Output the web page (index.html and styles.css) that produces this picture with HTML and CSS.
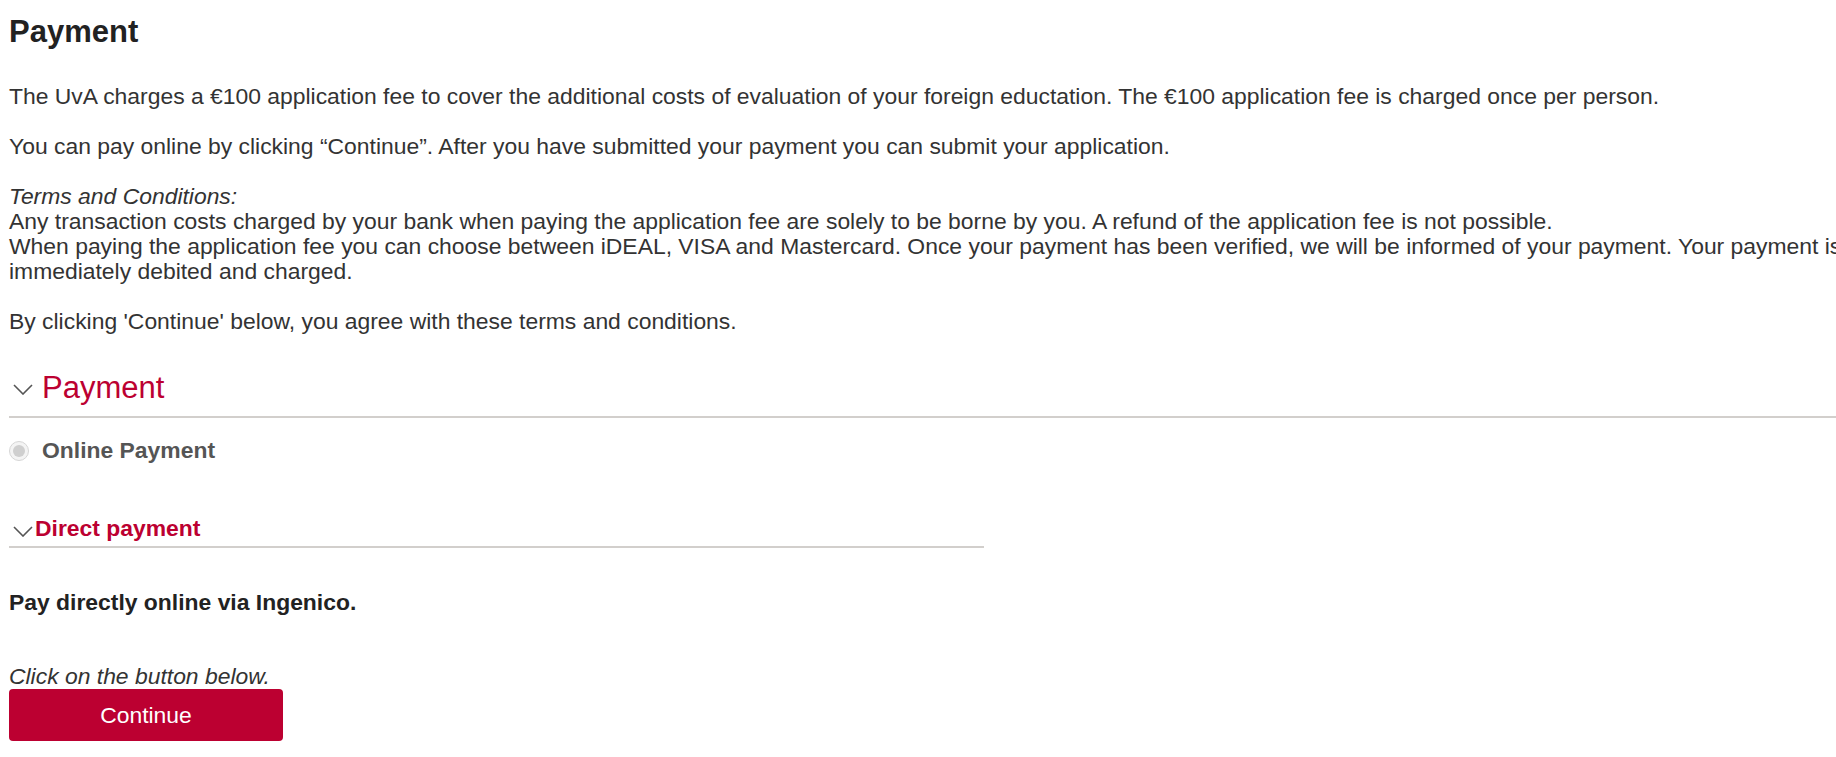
FILE: index.html
```html
<!DOCTYPE html>
<html lang="en">
<head>
  <meta charset="UTF-8">
  <title>Payment</title>
  <link rel="stylesheet" href="styles.css">
</head>
<body>
  <div class="page">
    <h1>Payment</h1>
    <p>The UvA charges a €100 application fee to cover the additional costs of evaluation of your foreign eductation. The €100 application fee is charged once per person.</p>
    <p>You can pay online by clicking “Continue”. After you have submitted your payment you can submit your application.</p>
    <p><em>Terms and Conditions:</em><br>
      Any transaction costs charged by your bank when paying the application fee are solely to be borne by you. A refund of the application fee is not possible.<br>
      When paying the application fee you can choose between iDEAL, VISA and Mastercard. Once your payment has been verified, we will be informed of your payment. Your payment is immediately debited and charged.</p>
    <p>By clicking 'Continue' below, you agree with these terms and conditions.</p>

    <div class="section-head">
      <svg class="chevron" width="20" height="11" viewBox="0 0 20 11"><polyline points="1,1 10,10 19,1" fill="none" stroke="#555" stroke-width="1.6"/></svg>
      <span>Payment</span>
    </div>

    <label class="option">
      <span class="radio"><span class="dot"></span></span>
      Online Payment
    </label>

    <div class="sub-head">
      <svg class="chevron-sm" width="20" height="11" viewBox="0 0 20 11"><polyline points="1,1 10,10 19,1" fill="none" stroke="#555" stroke-width="1.6"/></svg>
      <span>Direct payment</span>
    </div>

    <p class="via">Pay directly online via Ingenico.</p>
    <p class="hint"><em>Click on the button below.</em></p>
    <button class="btn-continue">Continue</button>
  </div>
</body>
</html>
```

FILE: styles.css
```css
body {
  margin: 0;
  padding: 0;
  overflow: hidden;
  background: #fff;
  font-family: "Liberation Sans", Arial, sans-serif;
  font-size: 22.9px;
  line-height: 25px;
  color: #333;
}
.page {
  width: 1900px;
  padding-left: 9px;
}
h1 {
  margin: 14px 0 35px;
  font-size: 31px;
  line-height: 35px;
  color: #222;
}
p {
  margin: 0 0 25px;
}
.section-head {
  display: flex;
  align-items: center;
  gap: 9px;
  margin-top: 36px;
  padding: 0 0 11px 4px;
  border-bottom: 2px solid #d2cfcc;
  font-size: 31px;
  line-height: 35px;
  color: #bc0031;
}
.section-head .chevron {
  margin-top: 4px;
}
.option {
  display: flex;
  align-items: center;
  gap: 13px;
  margin-top: 20px;
  font-weight: bold;
  color: #555;
}
.radio {
  display: flex;
  align-items: center;
  justify-content: center;
  width: 18px;
  height: 18px;
  border: 1px solid #d6d6d6;
  border-radius: 50%;
  background: #f4f4f4;
}
.radio .dot {
  width: 12px;
  height: 12px;
  border-radius: 50%;
  background: #cfcfcf;
}
.sub-head {
  display: flex;
  align-items: flex-end;
  gap: 2px;
  width: 971px;
  margin-top: 53px;
  padding: 0 0 5px 4px;
  border-bottom: 2px solid #d2cfcc;
  font-weight: bold;
  color: #bc0031;
}
.sub-head .chevron-sm {
  margin-bottom: 4px;
}
.via {
  margin: 42px 0 49px;
  font-weight: bold;
  color: #222;
}
.hint {
  margin: 0;
}
.btn-continue {
  display: block;
  width: 274px;
  height: 52px;
  padding: 0;
  border: none;
  border-radius: 4px;
  background: #bc0031;
  color: #fff;
  font-family: "Liberation Sans", Arial, sans-serif;
  font-size: 22.9px;
  cursor: pointer;
}
```
